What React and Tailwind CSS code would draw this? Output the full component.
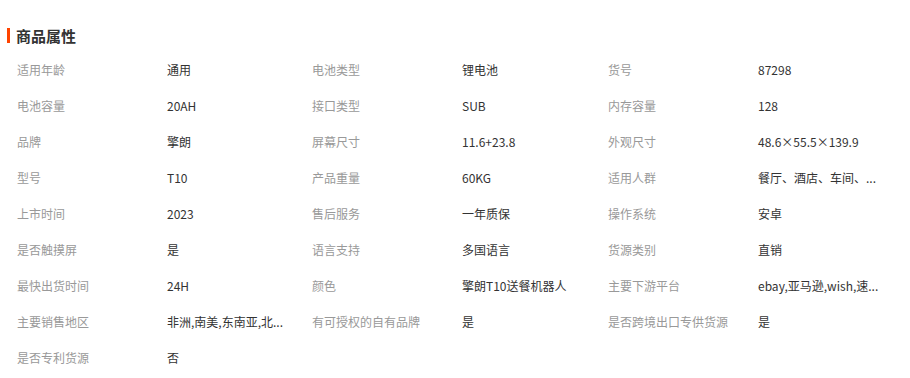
import React from "react";

const attrs = [
  ["适用年龄", "通用"],
  ["电池类型", "锂电池"],
  ["货号", "87298"],
  ["电池容量", "20AH"],
  ["接口类型", "SUB"],
  ["内存容量", "128"],
  ["品牌", "擎朗"],
  ["屏幕尺寸", "11.6+23.8"],
  ["外观尺寸", "48.6×55.5×139.9"],
  ["型号", "T10"],
  ["产品重量", "60KG"],
  ["适用人群", "餐厅、酒店、车间、..."],
  ["上市时间", "2023"],
  ["售后服务", "一年质保"],
  ["操作系统", "安卓"],
  ["是否触摸屏", "是"],
  ["语言支持", "多国语言"],
  ["货源类别", "直销"],
  ["最快出货时间", "24H"],
  ["颜色", "擎朗T10送餐机器人"],
  ["主要下游平台", "ebay,亚马逊,wish,速..."],
  ["主要销售地区", "非洲,南美,东南亚,北..."],
  ["有可授权的自有品牌", "是"],
  ["是否跨境出口专供货源", "是"],
  ["是否专利货源", "否"],
];

export default function App() {
  return (
    <div className="w-[910px] h-[378px] bg-white font-['Noto_Sans_CJK_SC',sans-serif] overflow-hidden">
      {/* 标题 */}
      <div className="flex items-center h-[52px] pl-[7px] pt-[18px]">
        <span className="w-[3px] h-[15px] bg-[#ff4400] mr-[6px]" />
        <h2 className="text-[15px] font-bold text-[#333] leading-none">商品属性</h2>
      </div>

      {/* 属性表 */}
      <div className="grid grid-cols-[295px_296px_296px] pl-[17px]">
        {attrs.map(([k, v]) => (
          <div key={k} className="flex items-center h-[36px] text-[12px]">
            <span className="w-[150px] shrink-0 text-[#999]">{k}</span>
            <span className="whitespace-nowrap text-[#333]">{v}</span>
          </div>
        ))}
      </div>
    </div>
  );
}
